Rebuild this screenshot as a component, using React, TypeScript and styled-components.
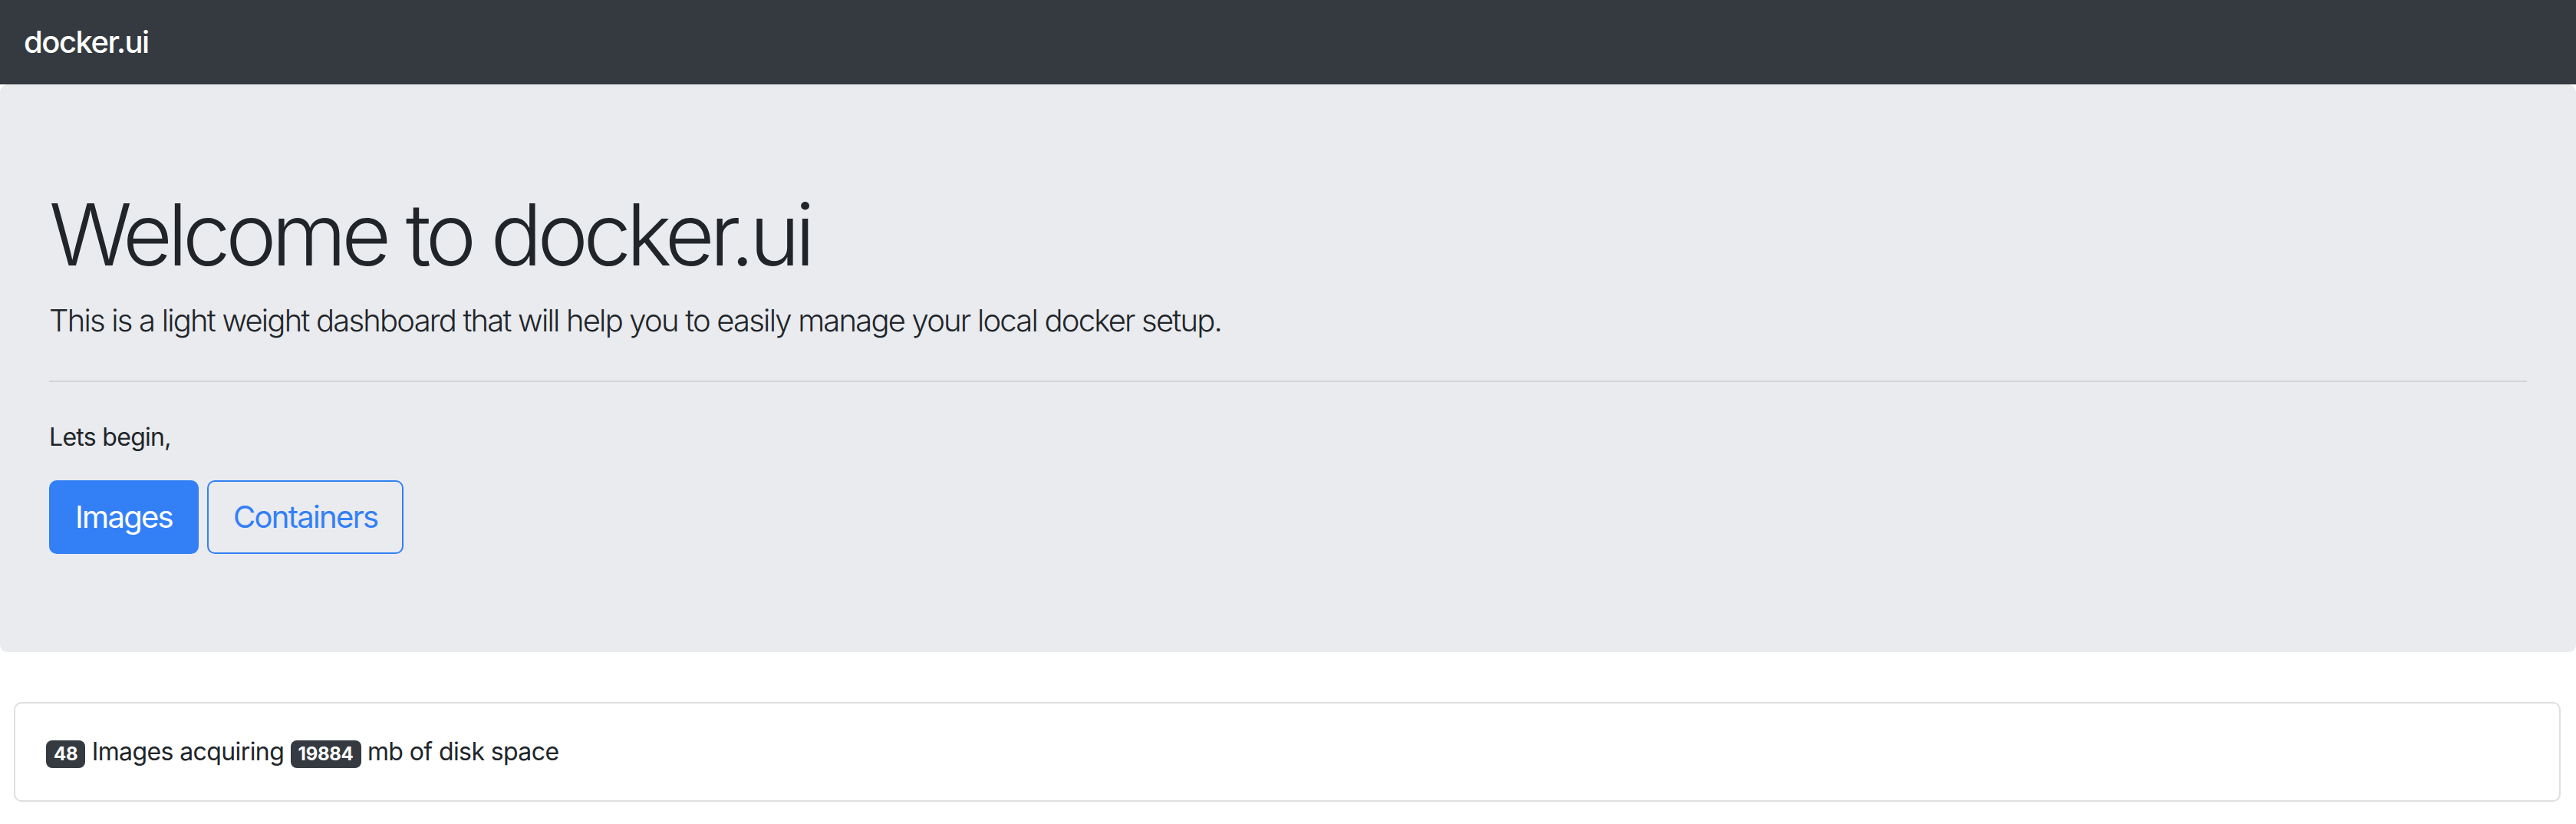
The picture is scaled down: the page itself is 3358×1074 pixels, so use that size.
import React from "react";
import styled, { createGlobalStyle } from "styled-components";

const GlobalStyle = createGlobalStyle`
  html, body {
    margin: 0;
    padding: 0;
    background: #ffffff;
  }
  body {
    font-family: Inter, "Noto Sans", "Liberation Sans", sans-serif;
    font-size: 32px;
    line-height: 1.5;
    color: #212529;
  }
  * { box-sizing: border-box; }
`;

const Navbar = styled.nav`
  display: flex;
  align-items: center;
  height: 110px;
  padding: 0 31px;
  background: #343a40;
`;

const Brand = styled.a`
  font-size: 40px;
  line-height: 60px;
  font-weight: 500;
  color: #ffffff;
  text-decoration: none;
  letter-spacing: -1.5px;
`;

const Jumbotron = styled.section`
  background: #e9ebef;
  border-radius: 10px;
  padding: 128px 64px;
  margin-bottom: 65px;
`;

const Title = styled.h1`
  margin: 0 0 16px;
  font-size: 112px;
  font-weight: 300;
  line-height: 1.2;
  letter-spacing: -6.5px;
`;

const Lead = styled.p`
  margin: 0;
  font-size: 40px;
  font-weight: 300;
  line-height: 1.5;
  letter-spacing: -1.8px;
`;

const Divider = styled.hr`
  margin: 48px 0;
  border: 0;
  border-top: 2px solid rgba(0, 0, 0, 0.1);
`;

const Text = styled.p`
  margin: 0 0 32px;
  font-size: 32px;
  line-height: 1.5;
  letter-spacing: -0.7px;
`;

const ButtonRow = styled.div`
  display: flex;
  gap: 11px;
`;

const Button = styled.a<{ $variant: "solid" | "outline" }>`
  display: inline-block;
  padding: 16px 32px;
  font-size: 40px;
  line-height: 60px;
  font-weight: 400;
  letter-spacing: -1.7px;
  border-radius: 10px;
  border: 2px solid #3380f6;
  text-decoration: none;
  background: ${(p) => (p.$variant === "solid" ? "#3380f6" : "transparent")};
  color: ${(p) => (p.$variant === "solid" ? "#ffffff" : "#3380f6")};
  cursor: pointer;
`;

const CardWrap = styled.div`
  padding: 0 20px 0 18px;
`;

const Card = styled.div`
  border: 2px solid #dfdfdf;
  border-radius: 10px;
  padding: 39px 40px;
  background: #ffffff;
`;

const Stat = styled.p`
  margin: 0;
  font-size: 32px;
  line-height: 48px;
  letter-spacing: -0.6px;
`;

const Badge = styled.span`
  display: inline-block;
  padding: 6px 10px;
  font-size: 24px;
  font-weight: 700;
  line-height: 1;
  letter-spacing: -0.3px;
  color: #ffffff;
  background: #343a40;
  border-radius: 8px;
  vertical-align: baseline;
`;

export default function App() {
  return (
    <>
      <GlobalStyle />
      <Navbar>
        <Brand href="#">docker.ui</Brand>
      </Navbar>
      <Jumbotron>
        <Title>Welcome to docker.ui</Title>
        <Lead>
          This is a light weight dashboard that will help you to easily manage
          your local docker setup.
        </Lead>
        <Divider />
        <Text>Lets begin,</Text>
        <ButtonRow>
          <Button $variant="solid">Images</Button>
          <Button $variant="outline">Containers</Button>
        </ButtonRow>
      </Jumbotron>
      <CardWrap>
        <Card>
          <Stat>
            <Badge>48</Badge> Images acquiring <Badge>19884</Badge> mb of disk
            space
          </Stat>
        </Card>
      </CardWrap>
    </>
  );
}
